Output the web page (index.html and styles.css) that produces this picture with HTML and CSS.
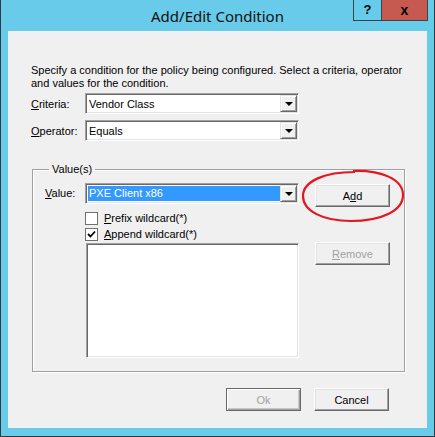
FILE: index.html
```html
<!DOCTYPE html>
<html lang="en">
  <head>
    <meta charset="UTF-8" />
    <title>Add/Edit Condition</title>
    <link rel="stylesheet" href="styles.css">
  </head>
  <body>
    <div class="window">
      <div class="title-bar">
        <span></span>
        <span class="title">Add/Edit Condition</span>
        <div class="caption-btns">
          <span class="cap-btn help">?</span>
          <span class="cap-btn close">x</span>
        </div>
      </div>

      <div class="panel">
        <p class="intro">Specify a condition for the policy being configured. Select a criteria, operator and values for the condition.</p>

        <div class="field-row">
          <label class="field-label"><u>C</u>riteria:</label>
          <div class="combo">
            <span class="combo-text">Vendor Class</span>
            <span class="combo-arrow"></span>
          </div>
        </div>
        <div class="field-row">
          <label class="field-label"><u>O</u>perator:</label>
          <div class="combo">
            <span class="combo-text">Equals</span>
            <span class="combo-arrow"></span>
          </div>
        </div>

        <fieldset class="group">
          <legend>Value(s)</legend>
          <div class="group-grid">
            <label class="value-label"><u>V</u>alue:</label>
            <div class="combo">
              <span class="combo-text"><span class="selected">PXE Client x86</span></span>
              <span class="combo-arrow"></span>
            </div>
            <div class="add-cell">
              <button class="btn add-btn">A<u>d</u>d</button>
              <!-- hand drawn highlight around Add -->
              <svg class="circle-mark" width="104" height="54" viewBox="0 0 104 54">
                <path d="M52 2 C80 1 102 10 102 26 C102 42 80 52 50 52 C22 52 2 42 2 27 C2 12 24 3 54 3" fill="none" stroke="#e4161f" stroke-width="2.2" />
              </svg>
            </div>

            <div class="checks">
              <label class="check-row"><span class="checkbox"></span><span><u>P</u>refix wildcard(*)</span></label>
              <label class="check-row">
                <span class="checkbox">
                  <svg width="9" height="9" viewBox="0 0 9 9"><path d="M1 4 L3.5 6.5 L8 1.5" fill="none" stroke="#000" stroke-width="1.8" /></svg>
                </span>
                <span><u>A</u>ppend wildcard(*)</span>
              </label>
            </div>

            <div class="listbox"></div>
            <button class="btn remove-btn" disabled><u>R</u>emove</button>
          </div>
        </fieldset>

        <div class="dialog-btns">
          <button class="btn default-btn" disabled>Ok</button>
          <button class="btn">Cancel</button>
        </div>
      </div>
    </div>
  </body>
</html>
```

FILE: styles.css
```css
/* Window frame */
body {
  margin: 0;
  font-family: "Liberation Sans", Arial, sans-serif;
  font-size: 11px;
  color: #000;
}

.window {
  width: 435px;
  height: 437px;
  box-sizing: border-box;
  background: #67cbe9;
  border: 1px solid #2e3a40;
  border-top: none;
}

.title-bar {
  height: 31px;
  display: grid;
  grid-template-columns: 1fr auto 1fr;
  align-items: start;
}

.title {
  font-family: "Noto Sans", sans-serif;
  font-size: 15px;
  line-height: 20px;
  margin-top: 6px;
  color: #111;
}

.caption-btns {
  justify-self: end;
  display: flex;
  margin-right: 6px;
  border: 1px solid #3a4448;
  border-top: none;
}

.cap-btn {
  height: 20px;
  line-height: 20px;
  text-align: center;
  font-weight: bold;
  font-family: "Liberation Sans", Arial, sans-serif;
}

.help {
  width: 27px;
  font-size: 13px;
  border-right: 1px solid #3a4448;
}

.close {
  width: 45px;
  font-size: 14px;
  background: #c75a50;
}

.panel {
  margin-left: 7px;
  width: 419px;
  height: 397px;
  box-sizing: border-box;
  background: #f0f0f0;
  padding: 33px 0 0 23px;
}

.intro {
  margin: 0;
  width: 372px;
  line-height: 13px;
}

/* Combo boxes */
.field-row {
  display: flex;
  align-items: center;
  margin-top: 3px;
}

.field-row + .field-row {
  margin-top: 6px;
}

.field-label {
  width: 54px;
}

.combo {
  width: 214px;
  height: 21px;
  box-sizing: border-box;
  display: flex;
  align-items: center;
  background: #fff;
  border: 1px solid;
  border-color: #a0a0a0 #fff #fff #a0a0a0;
  box-shadow: inset 1px 1px 0 #696969, inset -1px -1px 0 #e3e3e3;
  padding: 0 1px 0 2px;
}

.combo-text {
  flex: 1;
  padding-left: 1px;
}

.selected {
  display: block;
  background: #3399ff;
  color: #fff;
  line-height: 15px;
  margin-left: -1px;
  padding-left: 1px;
}

.combo-arrow {
  width: 17px;
  height: 17px;
  box-sizing: border-box;
  background: #f0f0f0;
  border: 1px solid;
  border-color: #e3e3e3 #696969 #696969 #e3e3e3;
  box-shadow: inset 1px 1px 0 #fff, inset -1px -1px 0 #a0a0a0;
  display: flex;
  align-items: center;
  justify-content: center;
}

.combo-arrow::after {
  content: "";
  border-left: 4px solid transparent;
  border-right: 4px solid transparent;
  border-top: 4px solid #000;
  margin-top: 1px;
}

/* Group box */
.group {
  margin: 22px 0 0 1px;
  width: 373px;
  box-sizing: border-box;
  padding: 0 0 13px 12px;
  border: 1px solid #a0a0a0;
  box-shadow: inset 1px 1px 0 #fff, 1px 1px 0 #fff;
}

.group legend {
  padding: 0 3px;
  margin-left: 4px;
  line-height: 13px;
}

.group-grid {
  display: grid;
  grid-template-columns: 40px 214px 16px 75px;
  align-items: start;
  margin-top: 7px;
}

.value-label {
  line-height: 21px;
}

.add-cell {
  grid-column: 4;
  position: relative;
}

.add-btn {
  margin-top: 1px;
}

.circle-mark {
  position: absolute;
  left: -14px;
  top: -14px;
  pointer-events: none;
}

.checks {
  grid-column: 2 / span 3;
  margin-top: 3px;
}

.check-row {
  display: flex;
  align-items: center;
  height: 16px;
  gap: 6px;
}

.checkbox {
  width: 13px;
  height: 13px;
  box-sizing: border-box;
  background: #fff;
  border: 1px solid #707070;
  display: flex;
  align-items: center;
  justify-content: center;
}

.listbox {
  grid-column: 2;
  margin: 1px 0 0 1px;
  height: 115px;
  box-sizing: border-box;
  background: #fff;
  border: 1px solid;
  border-color: #a0a0a0 #fff #fff #a0a0a0;
  box-shadow: inset 1px 1px 0 #696969, inset -1px -1px 0 #e3e3e3;
}

.remove-btn {
  grid-column: 4;
}

/* Buttons */
.btn {
  width: 75px;
  height: 23px;
  box-sizing: border-box;
  background: #f0f0f0;
  font-family: "Liberation Sans", Arial, sans-serif;
  font-size: 11px;
  color: #000;
  border: 1px solid;
  border-color: #fff #696969 #696969 #fff;
  box-shadow: inset -1px -1px 0 #a0a0a0, inset 1px 1px 0 #e3e3e3;
  padding: 0;
}

.btn:disabled {
  color: #a0a0a0;
}

.default-btn {
  border-color: #696969;
  box-shadow: inset 1px 1px 0 #fff, inset -1px -1px 0 #a0a0a0, inset -2px -2px 0 #c8c8c8;
}

.dialog-btns {
  display: flex;
  justify-content: flex-end;
  gap: 13px;
  margin: 16px 38px 0 0;
}
```
